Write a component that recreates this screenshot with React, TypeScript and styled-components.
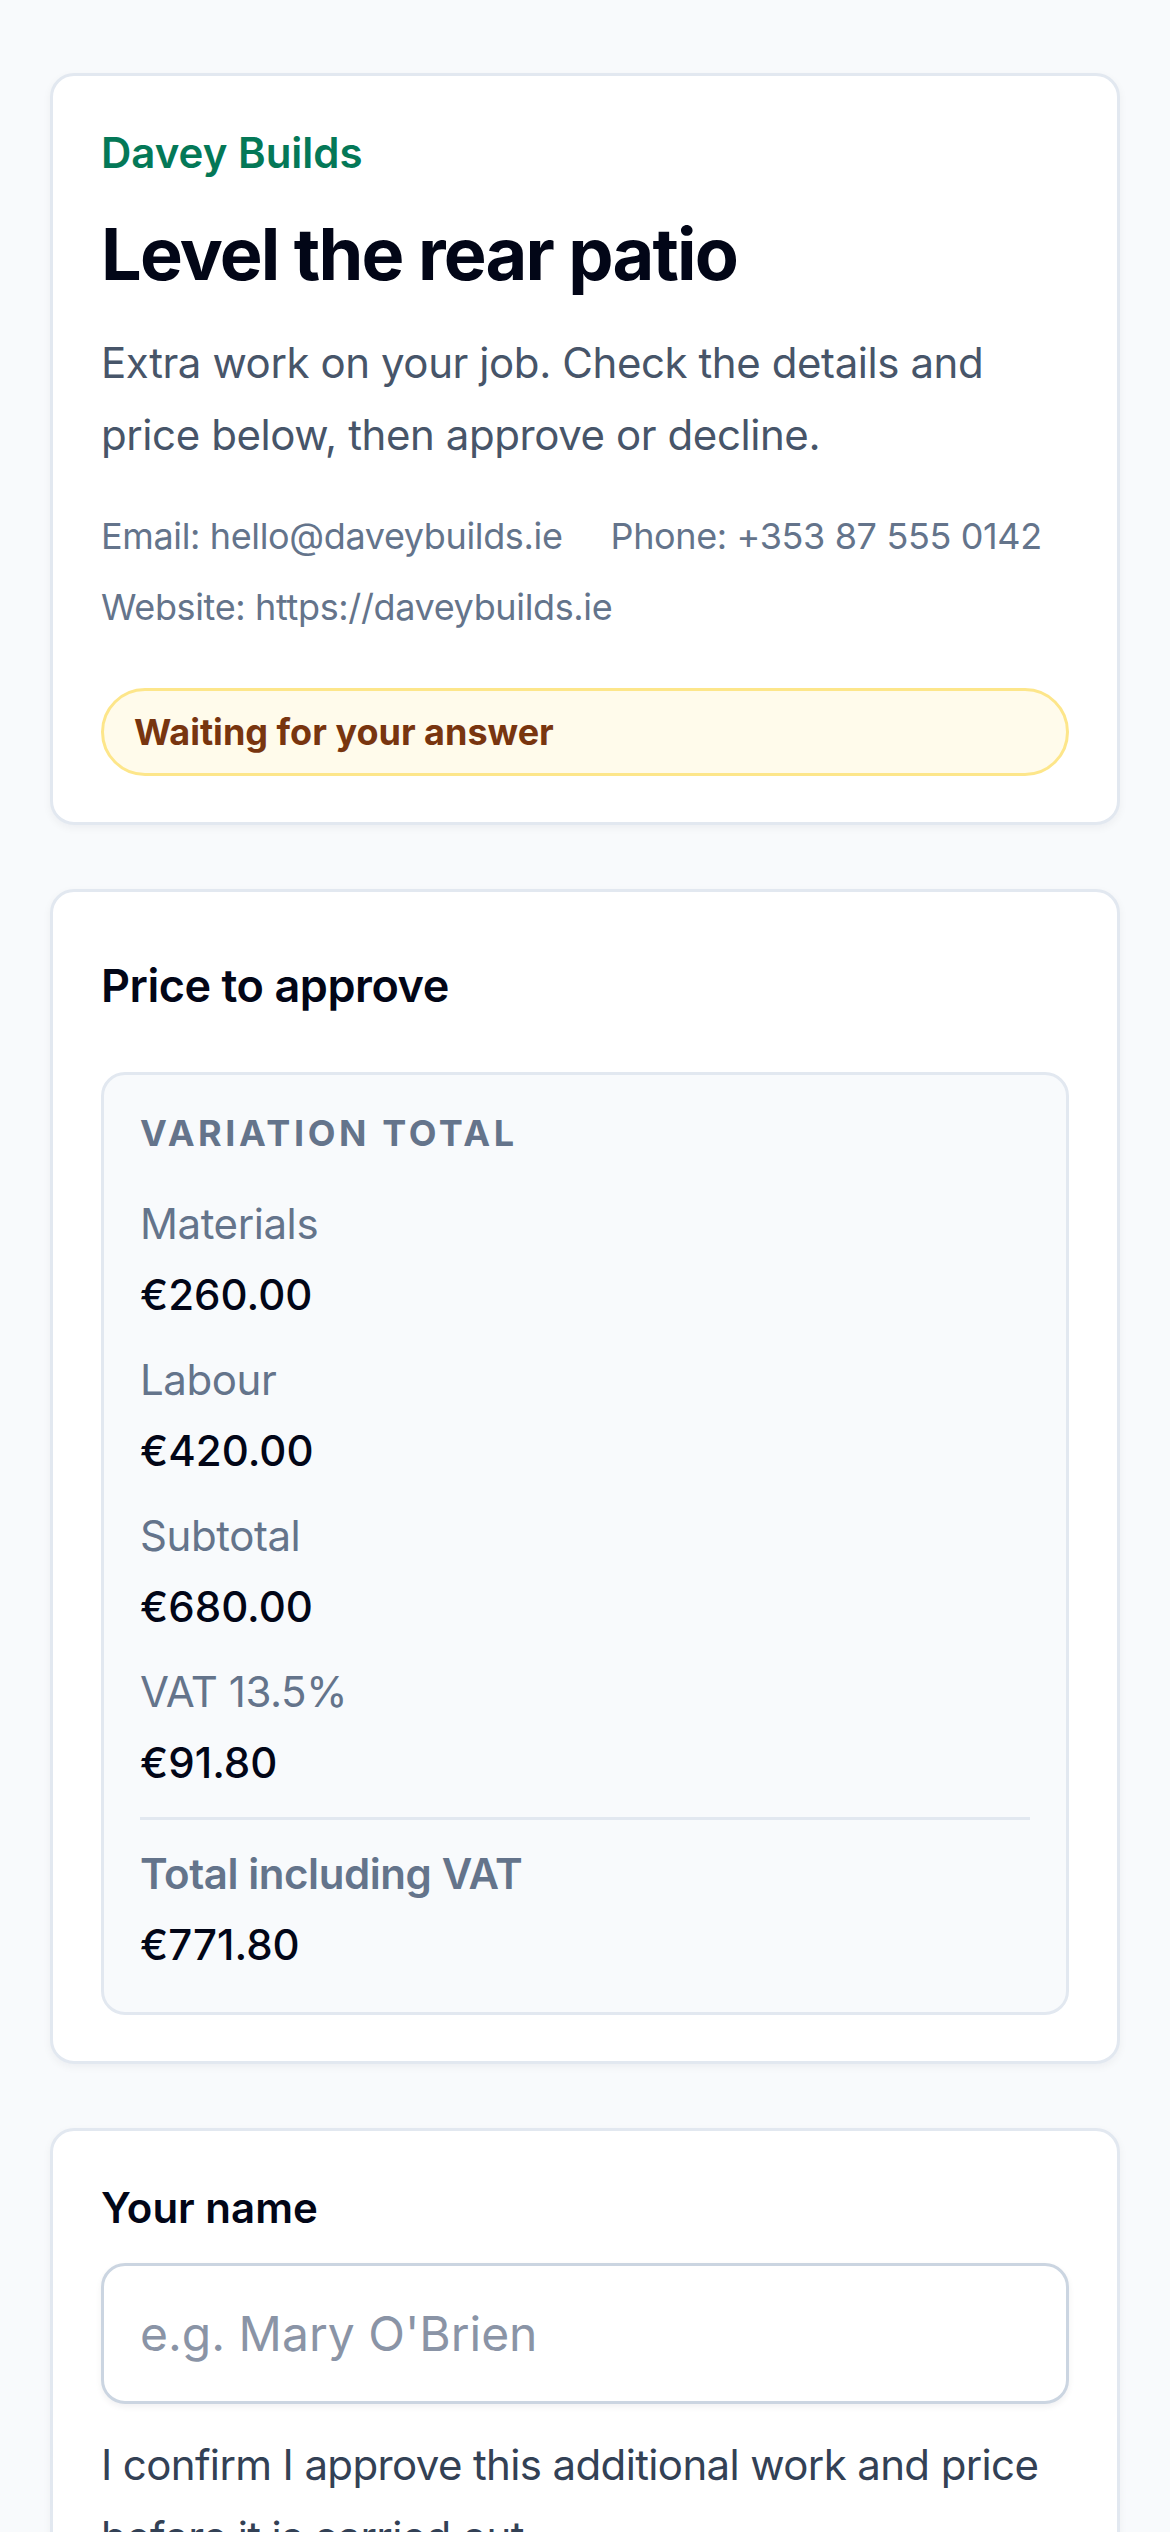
import React from "react";
import styled, { createGlobalStyle } from "styled-components";

const GlobalStyle = createGlobalStyle`
  * { box-sizing: border-box; }
  body {
    margin: 0;
    background: #f8fafc;
    font-family: Inter, "Noto Sans", "Liberation Sans", sans-serif;
    color: #0f172a;
  }
`;

const Page = styled.main`
  display: flex;
  flex-direction: column;
  gap: 64px;
  padding: 73px 50px 120px;
`;

const Card = styled.section<{ $padBottom?: number }>`
  background: #ffffff;
  border: 3px solid #e2e8f0;
  border-radius: 24px;
  padding: 48px 48px ${({ $padBottom }) => $padBottom ?? 48}px;
  box-shadow: 0 3px 9px rgba(15, 23, 42, 0.05);
`;

const Brand = styled.div`
  font-size: 42px;
  line-height: 58px;
  font-weight: 600;
  color: #047857;
`;

const Title = styled.h1`
  margin: 29px 0 0;
  font-size: 72px;
  line-height: 86px;
  font-weight: 700;
  letter-spacing: -0.025em;
  color: #020617;
`;

const Lead = styled.p`
  margin: 30px 0 0;
  font-size: 42px;
  line-height: 72px;
  letter-spacing: -0.01em;
  color: #475569;
`;

const ContactList = styled.div`
  display: flex;
  flex-wrap: wrap;
  column-gap: 48px;
  row-gap: 17px;
  margin-top: 38px;
  font-size: 36px;
  line-height: 54px;
  letter-spacing: -0.01em;
  color: #64748b;
`;

const StatusPill = styled.div`
  margin-top: 54px;
  padding: 14px 30px;
  border: 3px solid #fde68a;
  border-radius: 999px;
  background: #fffbeb;
  font-size: 36px;
  line-height: 54px;
  font-weight: 700;
  color: #78350f;
`;

const SectionTitle = styled.h2`
  margin: 19px 0 59px;
  font-size: 45px;
  line-height: 54px;
  font-weight: 600;
  letter-spacing: -0.01em;
  color: #020617;
`;

const TotalsBox = styled.div`
  border: 3px solid #e2e8f0;
  border-radius: 24px;
  background: #f8fafc;
  padding: 36px;
`;

const Eyebrow = styled.div`
  font-size: 36px;
  line-height: 44px;
  font-weight: 700;
  letter-spacing: 0.1em;
  text-transform: uppercase;
  color: #64748b;
`;

const Lines = styled.dl`
  display: flex;
  flex-direction: column;
  gap: 23px;
  margin: 38px 0 0;
`;

const LineItem = styled.div<{ $total?: boolean }>`
  display: flex;
  flex-direction: column;
  gap: 9px;
  ${({ $total }) =>
    $total &&
    `
    border-top: 3px solid #e2e8f0;
    padding-top: 23px;
  `}
`;

const LineLabel = styled.dt<{ $total?: boolean }>`
  font-size: 42px;
  line-height: 62px;
  font-weight: ${({ $total }) => ($total ? 600 : 400)};
  letter-spacing: -0.01em;
  color: #64748b;
`;

const LineValue = styled.dd`
  margin: 0;
  font-size: 42px;
  line-height: 62px;
  font-weight: 500;
  color: #020617;
`;

const FieldLabel = styled.label`
  display: block;
  font-size: 42px;
  line-height: 57px;
  font-weight: 600;
  color: #020617;
`;

const TextInput = styled.input`
  display: block;
  width: 100%;
  height: 141px;
  margin-top: 27px;
  padding: 0 36px;
  border: 3px solid #cbd5e1;
  border-radius: 24px;
  background: #ffffff;
  box-shadow: 0 3px 6px rgba(15, 23, 42, 0.06);
  font-family: inherit;
  font-size: 48px;
  color: #0f172a;
  outline: none;

  &::placeholder {
    color: #8a94a6;
  }
`;

const Confirm = styled.p`
  margin: 25px 0 0;
  font-size: 42px;
  line-height: 72px;
  letter-spacing: -0.015em;
  color: #334155;
`;

const Actions = styled.div`
  display: flex;
  flex-direction: column;
  gap: 24px;
  margin-top: 48px;
`;

const ActionButton = styled.button<{ $variant: "approve" | "decline" }>`
  height: 141px;
  border-radius: 24px;
  font-family: inherit;
  font-size: 45px;
  font-weight: 600;
  border: 3px solid ${({ $variant }) => ($variant === "approve" ? "#047857" : "#e2e8f0")};
  background: ${({ $variant }) => ($variant === "approve" ? "#047857" : "#ffffff")};
  color: ${({ $variant }) => ($variant === "approve" ? "#ffffff" : "#0f172a")};
`;

const priceLines = [
  { label: "Materials", value: "€260.00" },
  { label: "Labour", value: "€420.00" },
  { label: "Subtotal", value: "€680.00" },
  { label: "VAT 13.5%", value: "€91.80" },
];

export default function App() {
  return (
    <>
      <GlobalStyle />
      <Page>
        <Card $padBottom={46}>
          <Brand>Davey Builds</Brand>
          <Title>Level the rear patio</Title>
          <Lead>
            Extra work on your job. Check the details and price below, then
            approve or decline.
          </Lead>
          <ContactList>
            <span>Email: hello@daveybuilds.ie</span>
            <span>Phone: +353 87 555 0142</span>
            <span>Website: https://daveybuilds.ie</span>
          </ContactList>
          <StatusPill>Waiting for your answer</StatusPill>
        </Card>

        <Card $padBottom={46}>
          <SectionTitle>Price to approve</SectionTitle>
          <TotalsBox>
            <Eyebrow>Variation total</Eyebrow>
            <Lines>
              {priceLines.map((line) => (
                <LineItem key={line.label}>
                  <LineLabel>{line.label}</LineLabel>
                  <LineValue>{line.value}</LineValue>
                </LineItem>
              ))}
              <LineItem $total>
                <LineLabel $total>Total including VAT</LineLabel>
                <LineValue>€771.80</LineValue>
              </LineItem>
            </Lines>
          </TotalsBox>
        </Card>

        <Card>
          <FieldLabel htmlFor="customer-name">Your name</FieldLabel>
          <TextInput id="customer-name" placeholder="e.g. Mary O'Brien" />
          <Confirm>
            I confirm I approve this additional work and price before it is
            carried out.
          </Confirm>
          <Actions>
            <ActionButton $variant="approve">Approve variation</ActionButton>
            <ActionButton $variant="decline">Decline</ActionButton>
          </Actions>
        </Card>
      </Page>
    </>
  );
}
